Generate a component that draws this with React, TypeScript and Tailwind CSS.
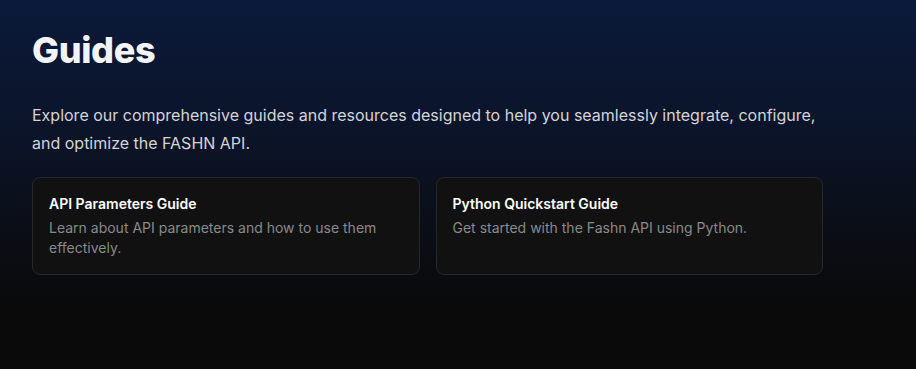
export default function App() {
  return (
    <div
      className="w-[916px] h-[369px] overflow-hidden bg-[linear-gradient(to_bottom,#0b1a3a_0%,#0b1429_35%,#0b0d14_65%,#0a0a0a_85%,#0a0a0a_100%)] px-8 pt-[30px]"
      style={{ fontFamily: "Inter, 'Noto Sans', sans-serif" }}
    >
      <h1 className="text-[36px] leading-[40px] font-extrabold text-[#f3f4f6] tracking-[-0.01em]">Guides</h1>
      <p className="mt-[31px] max-w-[791px] text-[16px] leading-[28px] text-[#d4d4d8]">
        Explore our comprehensive guides and resources designed to help you seamlessly integrate, configure, and optimize the FASHN API.
      </p>
      <div className="mt-[20px] grid w-[791px] grid-cols-2 gap-4">
        <div className="rounded-lg border border-[#27272a] bg-[#111111] p-4">
          <div className="text-[14px] leading-[20px] font-semibold text-white">API Parameters Guide</div>
          <div className="mt-1 text-[14px] leading-[20px] text-[#8a8a8a]">
            Learn about API parameters and how to use them effectively.
          </div>
        </div>
        <div className="rounded-lg border border-[#27272a] bg-[#111111] p-4">
          <div className="text-[14px] leading-[20px] font-semibold text-white">Python Quickstart Guide</div>
          <div className="mt-1 text-[14px] leading-[20px] text-[#8a8a8a]">
            Get started with the Fashn API using Python.
          </div>
        </div>
      </div>
    </div>
  );
}
